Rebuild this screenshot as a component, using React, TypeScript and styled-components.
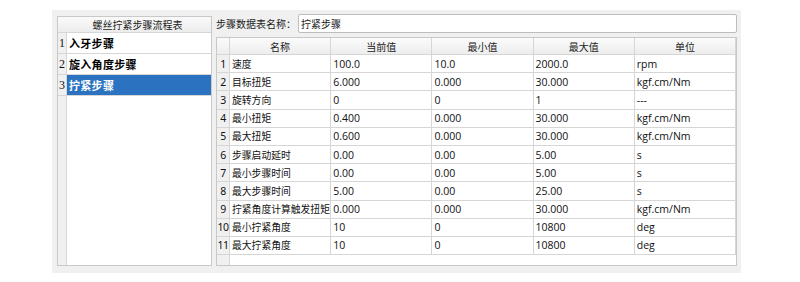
import { createGlobalStyle } from "styled-components";
import styled from "styled-components";

const Global = createGlobalStyle`
  html, body {
    margin: 0;
    padding: 0;
    background: #ffffff;
  }
  body {
    font-family: "Noto Sans", "Noto Sans CJK SC", sans-serif;
  }
`;

const Panel = styled.div`
  margin: 10px 0 0 52px;
  width: 689px;
  height: 263px;
  box-sizing: border-box;
  background: #f0f0f0;
  padding: 6px 4px 7px 5px;
  display: flex;
  gap: 4px;
`;

const StepList = styled.div`
  width: 155px;
  box-sizing: border-box;
  border: 1px solid #c8c8c8;
  background: #ffffff;
  display: grid;
  grid-template-columns: 9px 1fr;
  grid-template-rows: 16px repeat(3, 21px) 1fr;
`;

const ListHeader = styled.div`
  grid-column: 1 / span 2;
  border-bottom: 1px solid #d6d6d6;
  background: linear-gradient(#fafafa, #ececec);
  font: 10px "Noto Sans CJK SC", sans-serif;
  color: #222;
  display: flex;
  align-items: center;
  justify-content: center;
  padding-left: 6px;
`;

const RowNum = styled.div`
  background: #f0f0f0;
  border-right: 1px solid #d6d6d6;
  border-bottom: 1px solid #d6d6d6;
  font: 12px "Liberation Serif", serif;
  color: #111;
  display: flex;
  align-items: center;
  justify-content: center;
  overflow: hidden;
`;

const ListItem = styled.div<{ $selected?: boolean }>`
  border-bottom: 1px solid #d6d6d6;
  background: ${(p) => (p.$selected ? "#2b73c0" : "#ffffff")};
  color: ${(p) => (p.$selected ? "#ffffff" : "#000000")};
  font: bold 11px "Noto Sans CJK SC", sans-serif;
  display: flex;
  align-items: center;
  padding-left: 2px;
  letter-spacing: 0.3px;
`;

const Filler = styled.div`
  background: #f0f0f0;
  border-right: 1px solid #d6d6d6;
`;

const Right = styled.div`
  flex: 1;
  display: flex;
  flex-direction: column;
  gap: 4px;
  margin-top: -2px;
`;

const NameRow = styled.div`
  display: flex;
  align-items: center;
  height: 19px;
  gap: 2px;
`;

const NameLabel = styled.span`
  font: 10px "Noto Sans CJK SC", sans-serif;
  color: #222;
  white-space: nowrap;
`;

const NameInput = styled.div`
  flex: 1;
  height: 19px;
  box-sizing: border-box;
  border: 1px solid #bdbdbd;
  border-radius: 2px;
  background: #ffffff;
  font: 10px "Noto Sans CJK SC", sans-serif;
  color: #222;
  display: flex;
  align-items: center;
  padding-left: 2px;
`;

const Table = styled.div`
  flex: 1;
  box-sizing: border-box;
  border: 1px solid #c8c8c8;
  background: #ffffff;
  display: grid;
  grid-template-columns: 13px repeat(5, 1fr);
  grid-template-rows: 17px repeat(11, 18.2px) 1fr;
`;

const HeadCell = styled.div`
  background: linear-gradient(#fbfbfb, #ededed);
  border-right: 1px solid #d6d6d6;
  border-bottom: 1px solid #d6d6d6;
  font: 10px "Noto Sans CJK SC", sans-serif;
  color: #222;
  display: flex;
  align-items: center;
  justify-content: center;
`;

const IndexCell = styled.div`
  background: #f0f0f0;
  border-right: 1px solid #d6d6d6;
  border-bottom: 1px solid #d6d6d6;
  font: 10.5px "Noto Sans", sans-serif;
  color: #111;
  display: flex;
  align-items: center;
  justify-content: center;
  letter-spacing: -0.5px;
`;

const Cell = styled.div<{ $cjk?: boolean }>`
  border-right: 1px solid #d6d6d6;
  border-bottom: 1px solid #d6d6d6;
  font-family: ${(p) => (p.$cjk ? '"Noto Sans CJK SC", sans-serif' : '"Open Sans", "Noto Sans", sans-serif')};
  font-size: ${(p) => (p.$cjk ? "9.8px" : "10.5px")};
  color: #111;
  display: flex;
  align-items: center;
  padding-left: 2px;
  white-space: nowrap;
  overflow: hidden;
`;

const BlankIndex = styled.div`
  background: #f0f0f0;
  border-right: 1px solid #d6d6d6;
`;

const Blank = styled.div`
  grid-column: 2 / span 5;
`;

const steps = ["入牙步骤", "旋入角度步骤", "拧紧步骤"];

const columns = ["名称", "当前值", "最小值", "最大值", "单位"];

const rows: string[][] = [
  ["速度", "100.0", "10.0", "2000.0", "rpm"],
  ["目标扭矩", "6.000", "0.000", "30.000", "kgf.cm/Nm"],
  ["旋转方向", "0", "0", "1", "---"],
  ["最小扭矩", "0.400", "0.000", "30.000", "kgf.cm/Nm"],
  ["最大扭矩", "0.600", "0.000", "30.000", "kgf.cm/Nm"],
  ["步骤启动延时", "0.00", "0.00", "5.00", "s"],
  ["最小步骤时间", "0.00", "0.00", "5.00", "s"],
  ["最大步骤时间", "5.00", "0.00", "25.00", "s"],
  ["拧紧角度计算触发扭矩", "0.000", "0.000", "30.000", "kgf.cm/Nm"],
  ["最小拧紧角度", "10", "0", "10800", "deg"],
  ["最大拧紧角度", "10", "0", "10800", "deg"],
];

export default function App() {
  return (
    <>
      <Global />
      <Panel>
        <StepList>
          <ListHeader>螺丝拧紧步骤流程表</ListHeader>
          {steps.map((s, i) => [
            <RowNum key={`n${i}`}>{i + 1}</RowNum>,
            <ListItem key={`s${i}`} $selected={i === 2}>
              {s}
            </ListItem>,
          ])}
          <Filler />
          <div />
        </StepList>
        <Right>
          <NameRow>
            <NameLabel>步骤数据表名称：</NameLabel>
            <NameInput>拧紧步骤</NameInput>
          </NameRow>
          <Table>
            <HeadCell />
            {columns.map((c) => (
              <HeadCell key={c}>{c}</HeadCell>
            ))}
            {rows.map((r, i) => [
              <IndexCell key={`i${i}`}>{i + 1}</IndexCell>,
              ...r.map((v, j) => (
                <Cell key={`${i}-${j}`} $cjk={j === 0}>
                  {v}
                </Cell>
              )),
            ])}
            <BlankIndex />
            <Blank />
          </Table>
        </Right>
      </Panel>
    </>
  );
}
